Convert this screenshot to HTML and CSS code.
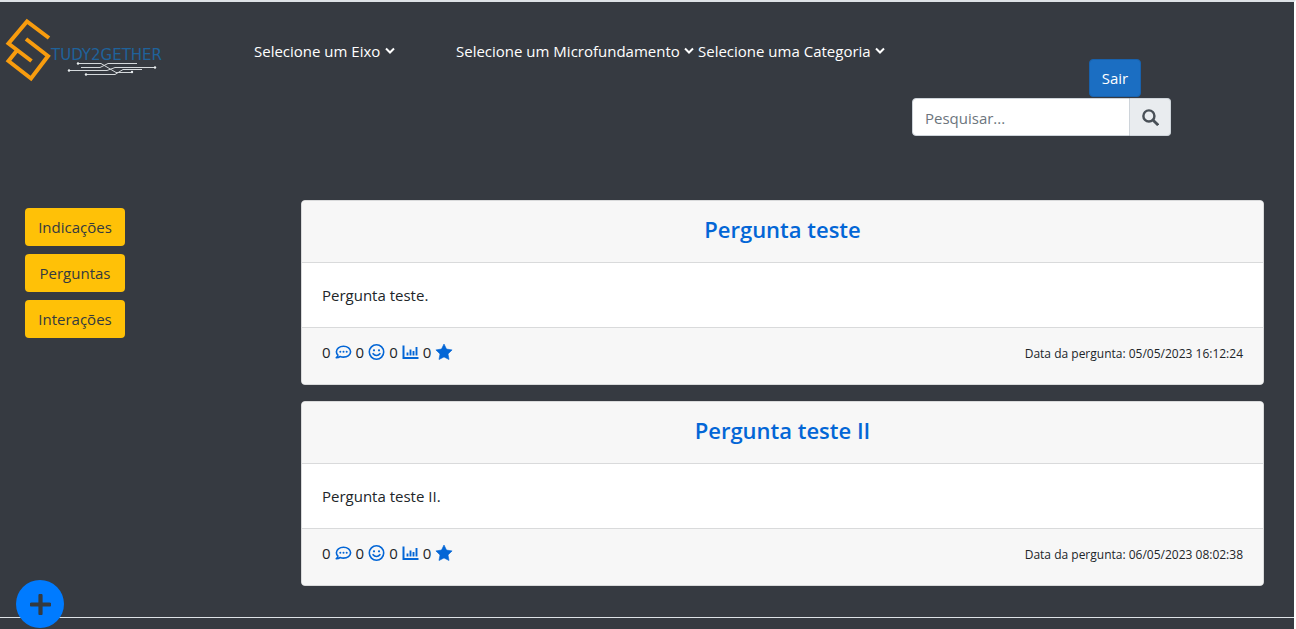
FILE: index.html
```html
<!DOCTYPE html>
<html lang="pt-BR">
<head>
<meta charset="utf-8">
<title>Study2gether</title>
<link rel="stylesheet" href="styles.css">
</head>
<body>
<svg class="sprite" aria-hidden="true">
  <symbol id="chevron" viewBox="0 0 10 8"><path d="M1 1.500l4 4 4-4" fill="none" stroke="currentColor" stroke-width="2"/></symbol>
  <symbol id="comment" viewBox="0 0 16 16"><path d="M8 2.200c-4 0-7.100 2.400-7.100 5.500 0 1.300.6 2.500 1.500 3.400-.2 1-.8 1.900-1.600 2.600 1.600 0 2.900-.5 3.900-1.200 1 .4 2.100.6 3.300.6 4 0 7.100-2.400 7.100-5.400S12 2.200 8 2.200z" fill="none" stroke="currentColor" stroke-width="1.600" stroke-linejoin="round"/><g fill="currentColor"><circle cx="4.800" cy="7.700" r="1"/><circle cx="8" cy="7.700" r="1"/><circle cx="11.200" cy="7.700" r="1"/></g></symbol>
  <symbol id="smile" viewBox="0 0 16 16"><circle cx="8" cy="8" r="7.200" fill="none" stroke="currentColor" stroke-width="1.600"/><circle cx="5.500" cy="6.300" r="1.100" fill="currentColor"/><circle cx="10.500" cy="6.300" r="1.100" fill="currentColor"/><path d="M4.600 9.700c1.700 2.300 5.100 2.300 6.800 0" fill="none" stroke="currentColor" stroke-width="1.600" stroke-linecap="round"/></symbol>
  <symbol id="chart" viewBox="0 0 16 16"><path d="M1 1.500v12.500h15" fill="none" stroke="currentColor" stroke-width="2"/><path d="M5 11.500v-3M8 11.500v-6M11 11.500v-4.500M14 11.500v-8.500" fill="none" stroke="currentColor" stroke-width="1.900"/></symbol>
  <symbol id="star" viewBox="0 0 18 16"><path d="M9 0l2.500 5.100 5.600.8-4.100 4 1 5.600L9 12.900l-5 2.600 1-5.600-4.100-4 5.600-.8z" fill="currentColor" stroke="currentColor" stroke-width=".6" stroke-linejoin="round"/></symbol>
</svg>

<header class="topbar">
  <a class="logo" href="#" aria-label="Study2gether">
    <svg class="logo-art" viewBox="0 0 176 84">
      <path d="M49 38L27 21.500 8.500 43.500l23 17.500M26 39l22 17-17 22.500L8.500 61l8-10" fill="none" stroke="#f89c0e" stroke-width="4"/>
      <text class="logo-text" x="51" y="60">TUDY2GETHER</text>
      <g fill="none" stroke="#d5d9dc" stroke-width="1">
        <path d="M78 63.500h23l15 9h16M137 63.500h-29l-8 4H81M69 70.500h38l8-3h40M86 74.500h29l8-5h19"/>
      </g>
      <g fill="#e8ecef"><circle cx="78" cy="63.500" r="1.200"/><circle cx="155" cy="67.500" r="1.200"/><circle cx="69" cy="70.500" r="1.200"/><circle cx="132" cy="72" r="1.200"/><circle cx="86" cy="74.500" r="1.200"/></g>
    </svg>
  </a>
  <nav class="filters" aria-label="Filtros">
    <div class="filter filter-axis"><select class="filter-select" aria-label="Eixo"><option>Selecione um Eixo</option></select><svg class="chevron"><use href="#chevron"/></svg></div>
    <div class="filter"><select class="filter-select" aria-label="Microfundamento"><option>Selecione um Microfundamento</option></select><svg class="chevron"><use href="#chevron"/></svg></div>
    <div class="filter"><select class="filter-select" aria-label="Categoria"><option>Selecione uma Categoria</option></select><svg class="chevron"><use href="#chevron"/></svg></div>
  </nav>
  <div class="account">
    <button class="logout" type="button">Sair</button>
    <form class="search">
      <input class="search-input" type="text" placeholder="Pesquisar..." aria-label="Pesquisar">
      <button class="search-button" type="button" aria-label="Buscar"><svg class="search-icon" viewBox="0 0 16 16"><circle cx="6.500" cy="6.500" r="5.200" fill="none" stroke="currentColor" stroke-width="2.300"/><path d="M10.500 10.500l4.700 4.700" stroke="currentColor" stroke-width="2.600"/></svg></button>
    </form>
  </div>
</header>

<div class="layout">
  <aside class="sidebar">
    <button class="side-button" type="button">Indicações</button>
    <button class="side-button" type="button">Perguntas</button>
    <button class="side-button" type="button">Interações</button>
  </aside>
  <main class="questions">
    <article class="card">
      <header class="card-header"><h2 class="card-title"><a href="#">Pergunta teste</a></h2></header>
      <p class="card-body">Pergunta teste.</p>
      <footer class="card-footer">
        <div class="stats">
          <span>0</span><a href="#" aria-label="Comentários"><svg class="icon"><use href="#comment"/></svg></a>
          <span>0</span><a href="#" aria-label="Reações"><svg class="icon"><use href="#smile"/></svg></a>
          <span>0</span><a href="#" aria-label="Estatísticas"><svg class="icon"><use href="#chart"/></svg></a>
          <span>0</span><a href="#" aria-label="Favoritos"><svg class="icon icon-star"><use href="#star"/></svg></a>
        </div>
        <small class="date">Data da pergunta: 05/05/2023 16:12:24</small>
      </footer>
    </article>
    <article class="card">
      <header class="card-header"><h2 class="card-title"><a href="#">Pergunta teste II</a></h2></header>
      <p class="card-body">Pergunta teste II.</p>
      <footer class="card-footer">
        <div class="stats">
          <span>0</span><a href="#" aria-label="Comentários"><svg class="icon"><use href="#comment"/></svg></a>
          <span>0</span><a href="#" aria-label="Reações"><svg class="icon"><use href="#smile"/></svg></a>
          <span>0</span><a href="#" aria-label="Estatísticas"><svg class="icon"><use href="#chart"/></svg></a>
          <span>0</span><a href="#" aria-label="Favoritos"><svg class="icon icon-star"><use href="#star"/></svg></a>
        </div>
        <small class="date">Data da pergunta: 06/05/2023 08:02:38</small>
      </footer>
    </article>
  </main>
</div>
<footer class="page-footer"></footer>
<button class="add-button" type="button" aria-label="Nova pergunta"><svg class="add-icon" viewBox="0 0 20 20"><path d="M10 1.500v17M1.500 10h17" stroke="currentColor" stroke-width="4" stroke-linecap="round"/></svg></button>
</body>
</html>
```

FILE: styles.css
```css
* { box-sizing: border-box; }
body {
  margin: 0;
  background: #363a41;
  color: #212529;
  font: 15px/24px "Open Sans", sans-serif;
  border-top: 2px solid #dee2e6;
  border-right: 2px solid #fff;
}
a { color: #0366d6; text-decoration: none; }
button, input, select { font: inherit; }
.sprite { display: none; }

.topbar {
  display: grid;
  grid-template-columns: 254px 1fr 259px;
  gap: 0 16px;
  align-items: start;
  padding-right: 123px;
  min-height: 198px;
}
.logo-art { display: block; width: 176px; height: 84px; margin-top: -2px; }
.logo-text { font: 15px "DejaVu Sans", sans-serif; fill: #1f629b; }
.filters { display: flex; gap: 4px; padding-top: 37px; margin-left: -16px; white-space: nowrap; }
.filter { display: flex; align-items: center; color: #fff; }
.filter-axis { min-width: 198px; }
.filter-select { appearance: none; background: none; border: 0; padding: 0; color: inherit; }
.filter-select option { color: #212529; }
.chevron { width: 10px; height: 8px; margin-left: 4px; }

.account { display: flex; flex-direction: column; padding-top: 57px; }
.logout {
  align-self: flex-end;
  margin-right: 30px;
  width: 52px;
  height: 38px;
  margin-bottom: 1px;
  padding: 0;
  color: #fff;
  background: #1b6ec2;
  border: 1px solid #1861ac;
  border-radius: 4px;
}
.search { display: flex; height: 38px; }
.search-input {
  flex: 1;
  min-width: 0;
  padding: 1px 12px 0;
  background: #fff;
  border: 1px solid #ced4da;
  border-radius: 4px 0 0 4px;
}
.search-input::placeholder { color: #6c757d; opacity: 1; }
.search-button {
  display: grid;
  place-items: center;
  width: 41px;
  padding: 0;
  color: #495057;
  background: #e9ecef;
  border: 1px solid #ced4da;
  border-left: 0;
  border-radius: 0 4px 4px 0;
}
.search-icon { width: 17px; height: 17px; }

.layout { display: grid; grid-template-columns: 100px 1fr; gap: 176px; padding: 0 30px 0 25px; }
.sidebar { display: flex; flex-direction: column; gap: 8px; padding-top: 8px; }
.side-button {
  height: 38px;
  padding: 0;
  color: #343a40;
  background: #ffc107;
  border: 0;
  border-radius: 4px;
}
.questions { display: flex; flex-direction: column; gap: 16px; }
.card { background: #fff; border: 1px solid #d9dadb; border-radius: 4px; overflow: hidden; }
.card-header { height: 62px; padding: 12px 20px; background: #f7f7f7; border-bottom: 1px solid #d9dadb; text-align: center; }
.card-title { margin: 0; font-size: 22px; line-height: 32px; font-weight: 600; }
.card-body { margin: 0; padding: 20px; }
.card-footer { display: flex; justify-content: space-between; height: 57px; padding: 12px 20px; background: #f7f7f7; border-top: 1px solid #d9dadb; }
.stats { display: flex; align-items: center; height: 24px; gap: 4px; }
.stats a { display: flex; }
.icon { width: 17px; height: 16px; }
.icon-star { width: 18px; }
.date { font-size: 12px; line-height: 28px; }
.page-footer { margin-top: 31px; height: 12px; border-top: 1px solid #dee2e6; }
.add-button {
  position: fixed;
  left: 16px;
  bottom: 1px;
  display: grid;
  place-items: center;
  width: 48px;
  height: 48px;
  padding: 0;
  color: #343a40;
  background: #007bff;
  border: 0;
  border-radius: 50%;
}
.add-icon { width: 21px; height: 21px; }
```
